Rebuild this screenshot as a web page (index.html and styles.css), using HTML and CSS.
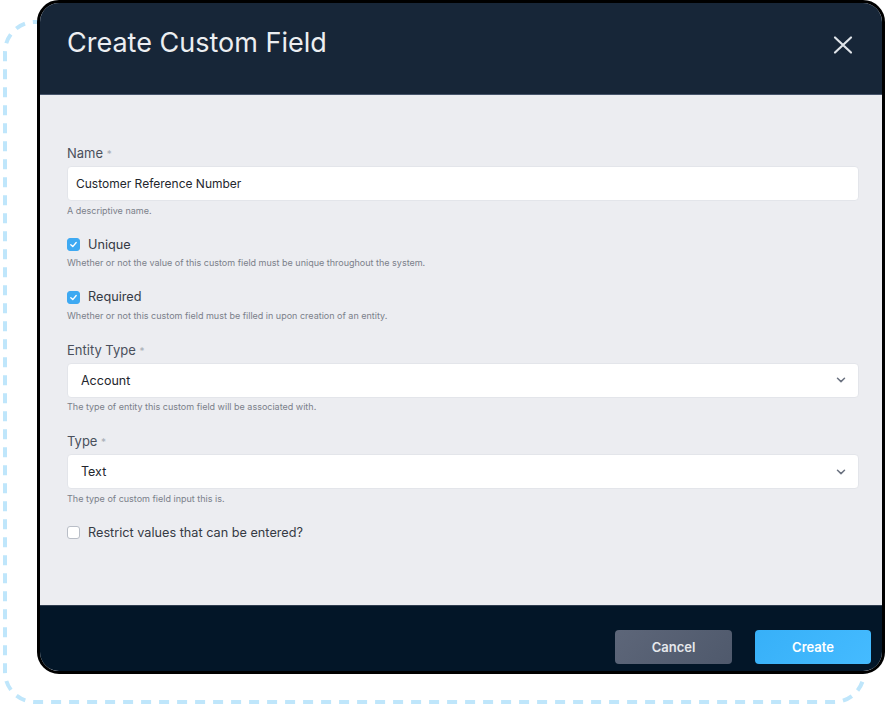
FILE: index.html
```html
<!DOCTYPE html>
<html lang="en">

<head>
    <meta charset="UTF-8">
    <meta name="viewport" content="width=device-width, initial-scale=1.0">
    <title>Create Custom Field</title>
    <link rel="stylesheet" href="styles.css">
</head>

<body>
    <div class="stage">
        <svg class="dashes" width="887" height="706" viewBox="0 0 887 706">
            <rect x="5" y="22" width="859" height="680" rx="30" ry="30" fill="none" stroke="#bfe6fb" stroke-width="4" stroke-dasharray="10 8"></rect>
        </svg>

        <div class="modal">
            <div class="modal-header">
                <h2>Create Custom Field</h2>
                <button class="close" type="button" aria-label="Close">
                    <svg width="20" height="20" viewBox="0 0 20 20">
                        <path d="M2 2.5 L18 17.5 M18 2.5 L2 17.5" stroke="#dfe3e8" stroke-width="2.2" stroke-linecap="round"></path>
                    </svg>
                </button>
            </div>

            <div class="modal-body">
                <div class="field">
                    <label class="label">Name <span class="req">*</span></label>
                    <input class="text-input" type="text" value="Customer Reference Number">
                    <small class="help">A descriptive name.</small>
                </div>

                <div class="field">
                    <div class="check-row">
                        <span class="checkbox checked">
                            <svg width="9" height="9" viewBox="0 0 10 10"><path d="M2 5.2 L4.2 7.3 L8 2.8" fill="none" stroke="#fff" stroke-width="1.5" stroke-linecap="round" stroke-linejoin="round"></path></svg>
                        </span>
                        <span class="check-label">Unique</span>
                    </div>
                    <small class="help help-check">Whether or not the value of this custom field must be unique throughout the system.</small>
                </div>

                <div class="field">
                    <div class="check-row">
                        <span class="checkbox checked">
                            <svg width="9" height="9" viewBox="0 0 10 10"><path d="M2 5.2 L4.2 7.3 L8 2.8" fill="none" stroke="#fff" stroke-width="1.5" stroke-linecap="round" stroke-linejoin="round"></path></svg>
                        </span>
                        <span class="check-label">Required</span>
                    </div>
                    <small class="help help-check">Whether or not this custom field must be filled in upon creation of an entity.</small>
                </div>

                <div class="field">
                    <label class="label">Entity Type <span class="req">*</span></label>
                    <div class="select">
                        <span>Account</span>
                        <svg width="10" height="6" viewBox="0 0 10 6"><path d="M1.5 1.2 L5 4.6 L8.5 1.2" fill="none" stroke="#6b7280" stroke-width="1.5" stroke-linecap="round" stroke-linejoin="round"></path></svg>
                    </div>
                    <small class="help">The type of entity this custom field will be associated with.</small>
                </div>

                <div class="field">
                    <label class="label">Type <span class="req">*</span></label>
                    <div class="select">
                        <span>Text</span>
                        <svg width="10" height="6" viewBox="0 0 10 6"><path d="M1.5 1.2 L5 4.6 L8.5 1.2" fill="none" stroke="#6b7280" stroke-width="1.5" stroke-linecap="round" stroke-linejoin="round"></path></svg>
                    </div>
                    <small class="help">The type of custom field input this is.</small>
                </div>

                <div class="field">
                    <div class="check-row">
                        <span class="checkbox"></span>
                        <span class="check-label">Restrict values that can be entered?</span>
                    </div>
                </div>
            </div>

            <div class="modal-footer">
                <button class="btn btn-cancel" type="button">Cancel</button>
                <button class="btn btn-create" type="button">Create</button>
            </div>
        </div>
    </div>
</body>

</html>
```

FILE: styles.css
```css
body {
    margin: 0;
    background-color: #fff;
    font-family: Inter, "Noto Sans", sans-serif;
}

.stage {
    position: relative;
    width: 887px;
    height: 706px;
    padding-left: 37px;
    box-sizing: border-box;
}

.dashes {
    position: absolute;
    left: 0;
    top: 0;
}

.modal {
    position: relative;
    width: 848px;
    height: 674px;
    border: 3px solid #000;
    border-radius: 22px;
    overflow: hidden;
    display: flex;
    flex-direction: column;
    box-sizing: border-box;
    background-color: #ecedf1;
}

.modal-header {
    height: 92px;
    flex-shrink: 0;
    background-color: #172638;
    border-bottom: 1px solid #46546a;
    display: flex;
    justify-content: space-between;
    align-items: flex-start;
    padding: 23px 29px 0 27px;
    box-sizing: border-box;
}

.modal-header h2 {
    margin: 0;
    font-size: 27px;
    line-height: 33px;
    font-weight: 400;
    color: #eceef1;
}

.close {
    background: none;
    border: none;
    padding: 0;
    margin-top: 9px;
    width: 20px;
    height: 20px;
    cursor: pointer;
}

.modal-body {
    flex-grow: 1;
    padding: 50px 23px 0 27px;
    background-color: #ecedf1;
}

.field {
    display: flex;
    flex-direction: column;
    margin-bottom: 20px;
}

.label {
    font-size: 13px;
    line-height: 16px;
    color: #4a505c;
    margin-bottom: 4px;
}

.req {
    color: #a8adb6;
    font-size: 10px;
}

.text-input {
    height: 35px;
    box-sizing: border-box;
    border: 1px solid #e3e5ea;
    border-radius: 4px;
    background-color: #fff;
    padding: 0 8px;
    font-family: Inter, "Noto Sans", sans-serif;
    font-size: 12px;
    color: #23262d;
    outline: none;
}

.select {
    height: 35px;
    box-sizing: border-box;
    border: 1px solid #e3e5ea;
    border-radius: 4px;
    background-color: #fff;
    padding: 0 12px 0 13px;
    font-size: 12.5px;
    color: #23262d;
    display: flex;
    align-items: center;
    justify-content: space-between;
}

.help {
    font-size: 9px;
    line-height: 12px;
    color: #7b808a;
    margin-top: 3.5px;
}

.help-check {
    margin-top: 4.5px;
}

.check-row {
    display: flex;
    align-items: center;
    height: 16px;
}

.checkbox {
    width: 13px;
    height: 13px;
    box-sizing: border-box;
    border: 1px solid #b9bec7;
    border-radius: 3px;
    background-color: #fff;
    display: flex;
    align-items: center;
    justify-content: center;
    flex-shrink: 0;
}

.checkbox.checked {
    background-color: #3ea9f2;
    border-color: #3ea9f2;
}

.check-label {
    margin-left: 8px;
    font-size: 12.7px;
    line-height: 16px;
    color: #353a44;
}

.modal-footer {
    height: 66px;
    flex-shrink: 0;
    background-color: #031628;
    border-top: 1px solid #2f3d4f;
    display: flex;
    justify-content: flex-end;
    align-items: flex-start;
    gap: 23px;
    padding: 24px 11px 0 0;
    box-sizing: border-box;
}

.btn {
    height: 34px;
    border: none;
    border-radius: 4px;
    font-family: Inter, "Noto Sans", sans-serif;
    font-size: 13px;
    font-weight: 600;
    cursor: pointer;
}

.btn-cancel {
    width: 117px;
    background: linear-gradient(135deg, #5d6679, #4f596c);
    color: #e6e8ec;
}

.btn-create {
    width: 116px;
    background: linear-gradient(135deg, #37b0f8, #45bbff);
    color: #fff;
}
```
